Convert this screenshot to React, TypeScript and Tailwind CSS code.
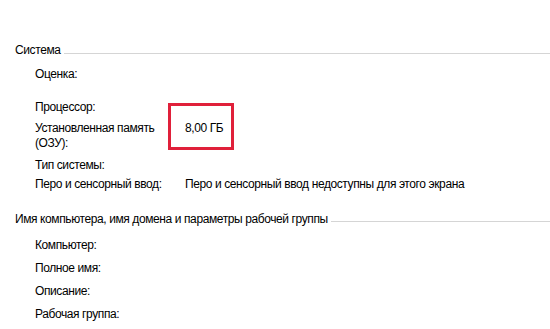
export default function App() {
  const font = { fontFamily: '"Liberation Sans", "DejaVu Sans", sans-serif' };

  return (
    <div className="w-[550px] h-[329px] bg-white text-black text-[12px] leading-[15px] tracking-[-0.4px] overflow-hidden" style={font}>
      {/* Система */}
      <section className="pt-[43px] pl-[15px]">
        <div className="flex items-start">
          <span className="whitespace-nowrap">Система</span>
          <div className="flex-1 h-px bg-[#d5d5d5] ml-[3px] mt-[10px]" />
        </div>

        <div className="pl-[20px]">
          <div className="mt-[9px] flex">
            <span className="w-[150px] shrink-0">Оценка:</span>
          </div>
          <div className="mt-[18px] flex">
            <span className="w-[150px] shrink-0">Процессор:</span>
          </div>
          <div className="mt-[6px] flex">
            <span className="w-[150px] shrink-0 pr-[12px]">Установленная память (ОЗУ):</span>
            <span className="relative">
              8,00 ГБ
              <span className="absolute left-[-17px] top-[-18px] w-[66px] h-[47px] border-[3px] border-[#e0203a]" />
            </span>
          </div>
          <div className="mt-[7px] flex">
            <span className="w-[150px] shrink-0">Тип системы:</span>
          </div>
          <div className="mt-[4px] flex">
            <span className="w-[150px] shrink-0">Перо и сенсорный ввод:</span>
            <span className="whitespace-nowrap">Перо и сенсорный ввод недоступны для этого экрана</span>
          </div>
        </div>
      </section>

      {/* Имя компьютера */}
      <section className="pt-[20px] pl-[15px]">
        <div className="flex items-start">
          <span className="whitespace-nowrap">Имя компьютера, имя домена и параметры рабочей группы</span>
          <div className="flex-1 h-px bg-[#d5d5d5] ml-[3px] mt-[9px]" />
        </div>

        <div className="pl-[20px]">
          <div className="mt-[11px]">Компьютер:</div>
          <div className="mt-[8px]">Полное имя:</div>
          <div className="mt-[8px]">Описание:</div>
          <div className="mt-[8px]">Рабочая группа:</div>
        </div>
      </section>
    </div>
  );
}
